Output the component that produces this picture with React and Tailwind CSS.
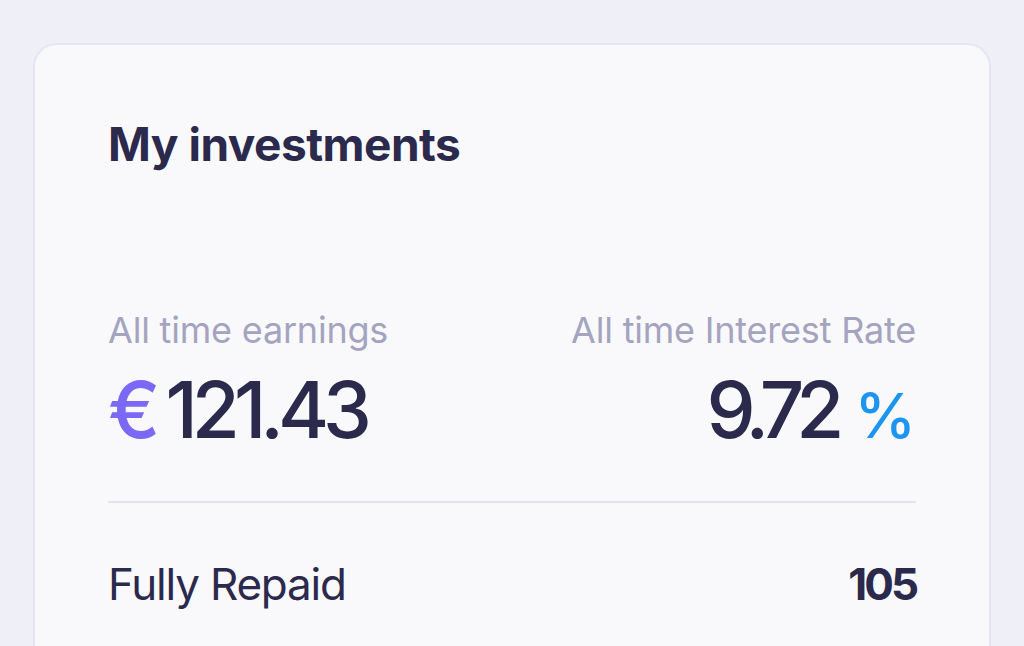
export default function App() {
  return (
    <div
      className="w-[1024px] h-[646px] overflow-hidden bg-[#efeff8] pt-[43px] px-[33px]"
      style={{ fontFamily: "Inter, 'Noto Sans', sans-serif" }}
    >
      <div className="h-[640px] rounded-[24px] border-2 border-[#e6e6f2] bg-[#f9f9fc] px-[73px] pt-[69px]">
        <h1 className="text-[46px] leading-[60px] font-bold text-[#2b2a4c] tracking-[-0.5px]">
          My investments
        </h1>
        <div className="mt-[136px] flex justify-between">
          <div className="flex flex-col">
            <span className="text-[36px] leading-[40px] text-[#a4a4c0] tracking-[-0.2px]">All time earnings</span>
            <div className="mt-[18px] flex items-baseline text-[78px] leading-[84px] font-medium text-[#2b2a4c] tracking-[-6px]">
              <span className="text-[#7b68f5] mr-[5px] tracking-normal">€</span>
              <span>121.43</span>
            </div>
          </div>
          <div className="flex flex-col items-end">
            <span className="text-[36px] leading-[40px] text-[#a4a4c0] tracking-[-0.2px]">All time Interest Rate</span>
            <div className="mt-[18px] flex items-baseline text-[78px] leading-[84px] font-medium text-[#2b2a4c] tracking-[-8px]">
              <span>9.72</span>
              <span className="text-[#1b95f0] ml-[18px] text-[62px] tracking-normal">%</span>
            </div>
          </div>
        </div>
        <div className="mt-[43px] h-[2px] bg-[#e2e2ee]" />
        <div className="mt-[55px] flex justify-between items-baseline">
          <span className="text-[44px] leading-[52px] text-[#2b2a4c] tracking-[-1.2px]">Fully Repaid</span>
          <span className="text-[44px] leading-[52px] font-bold text-[#2b2a4c] tracking-[-3px]">105</span>
        </div>
      </div>
    </div>
  );
}
